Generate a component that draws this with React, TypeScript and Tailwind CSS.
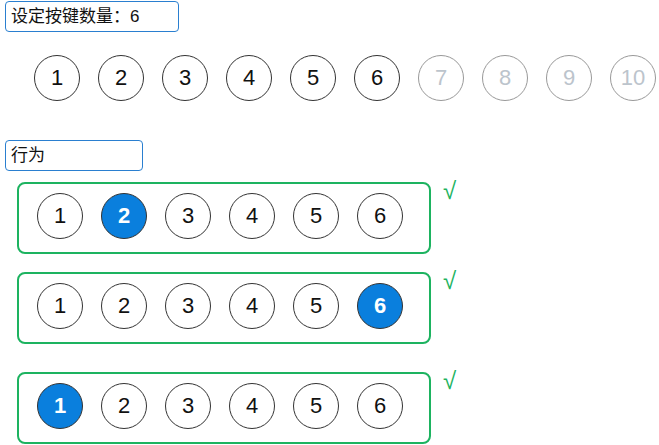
import React from 'react';

const font = { fontFamily: '"Liberation Sans", "Noto Sans CJK SC", sans-serif' };

const Key: React.FC<{ n: number; active?: boolean; disabled?: boolean }> = ({ n, active, disabled }) => {
    let cls = 'border-[#333] text-[#111] bg-white';
    if (active) cls = 'border-[#333] bg-[#0a7fdd] text-white font-bold';
    if (disabled) cls = 'border-[#999] text-[#bcc4cc] bg-white';
    return (
        <div className={`w-[46px] h-[46px] shrink-0 rounded-full border flex items-center justify-center text-[22px] leading-none ${cls}`}>
            {n}
        </div>
    );
};

const Behavior: React.FC<{ active: number; className?: string }> = ({ active, className }) => (
    <div className={`flex items-start ${className ?? ''}`}>
        <div className="w-[414px] h-[72px] border-2 border-[#1db360] rounded-[8px] pl-[18px] pt-[9px] flex gap-[18px]">
            {[1, 2, 3, 4, 5, 6].map((n) => (
                <Key key={n} n={n} active={n === active} />
            ))}
        </div>
        <span className="ml-[12px] mt-[-3px] text-[24px] text-[#1db360] leading-none">√</span>
    </div>
);

export default function App() {
    const count = 6;
    return (
        <div className="w-[659px] h-[445px] bg-white relative overflow-hidden" style={font}>
            {/* key count */}
            <div className="pt-[1px] pl-[5px]">
                <div className="w-[174px] h-[31px] border border-[#2a7fd0] rounded-[4px] pl-[5px] flex items-center text-[17px] text-[#111]">
                    设定按键数量：6
                </div>
            </div>

            <div className="mt-[23px] pl-[34px] flex gap-[18px]">
                {[1, 2, 3, 4, 5, 6, 7, 8, 9, 10].map((n) => (
                    <Key key={n} n={n} disabled={n > count} />
                ))}
            </div>

            {/* behaviors */}
            <div className="mt-[39px] pl-[5px]">
                <div className="w-[138px] h-[31px] border border-[#2a7fd0] rounded-[4px] pl-[5px] flex items-center text-[17px] text-[#111]">
                    行为
                </div>
            </div>

            <div className="pl-[17px]">
                <Behavior active={2} className="mt-[11px]" />
                <Behavior active={6} className="mt-[18px]" />
                <Behavior active={1} className="mt-[28px]" />
            </div>
        </div>
    );
}
